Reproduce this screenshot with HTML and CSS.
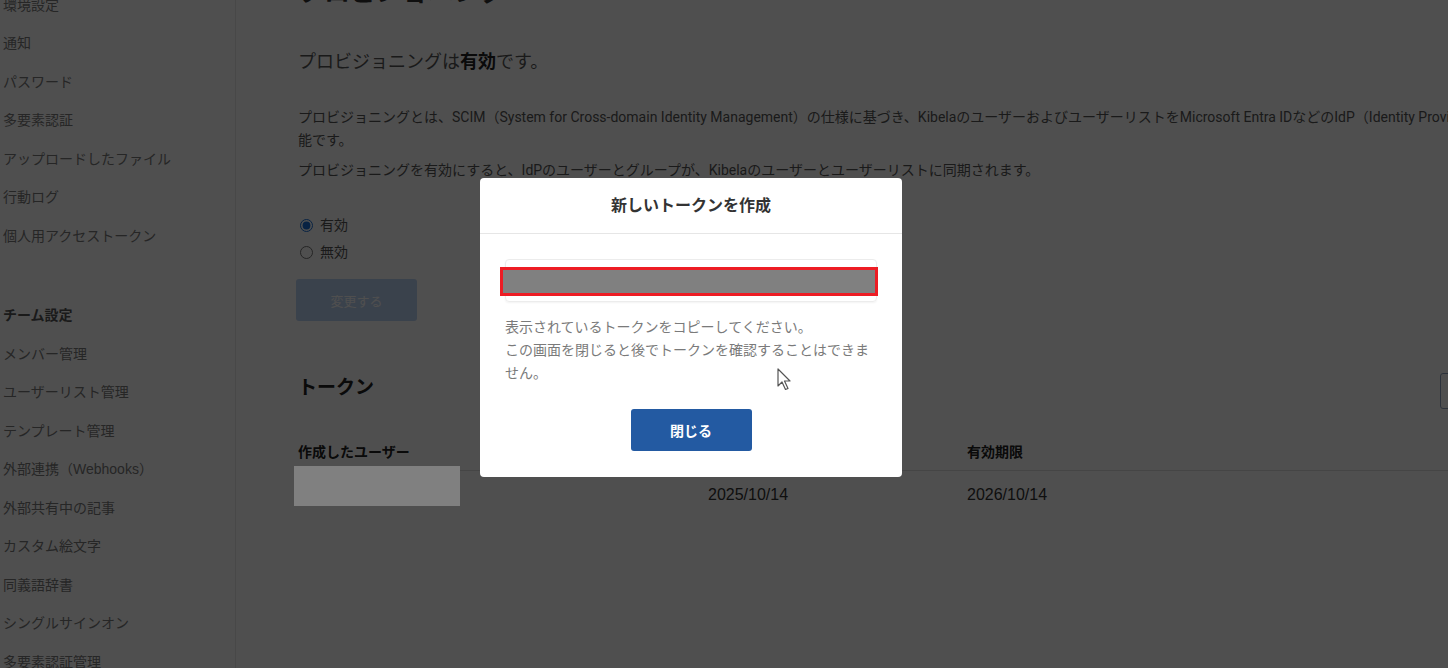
FILE: index.html
```html
<!DOCTYPE html>
<html lang="ja">
<head>
    <meta charset="UTF-8">
    <meta name="viewport" content="width=device-width, initial-scale=1.0">
    <title>プロビジョニング - 設定</title>
    <link rel="stylesheet" href="styles.css">
</head>
<body>
    <div class="layout">
        <aside class="sidebar">
            <h3 class="side-title">個人設定</h3>
            <ul class="side-menu">
                <li>環境設定</li>
                <li>通知</li>
                <li>パスワード</li>
                <li>多要素認証</li>
                <li>アップロードしたファイル</li>
                <li>行動ログ</li>
                <li>個人用アクセストークン</li>
            </ul>
            <h3 class="side-title team">チーム設定</h3>
            <ul class="side-menu">
                <li>メンバー管理</li>
                <li>ユーザーリスト管理</li>
                <li>テンプレート管理</li>
                <li>外部連携（Webhooks）</li>
                <li>外部共有中の記事</li>
                <li>カスタム絵文字</li>
                <li>同義語辞書</li>
                <li>シングルサインオン</li>
                <li>多要素認証管理</li>
                <li>プロビジョニング</li>
            </ul>
        </aside>

        <main class="content">
            <h1 class="page-title">プロビジョニング</h1>
            <p class="status">プロビジョニングは<strong>有効</strong>です。</p>
            <p class="desc">プロビジョニングとは、SCIM（System for Cross-domain Identity Management）の仕様に基づき、KibelaのユーザーおよびユーザーリストをMicrosoft Entra IDなどのIdP（Identity Provider）と自動同期が可能です。</p>
            <p class="desc">プロビジョニングを有効にすると、IdPのユーザーとグループが、Kibelaのユーザーとユーザーリストに同期されます。</p>

            <form class="toggle">
                <label class="radio"><input type="radio" name="provisioning" checked> 有効</label>
                <label class="radio"><input type="radio" name="provisioning"> 無効</label>
                <button class="btn-primary" type="button">変更する</button>
            </form>

            <div class="section-head">
                <h2>トークン</h2>
                <button class="btn-outline" type="button">新しいトークンを作成</button>
            </div>

            <table class="tokens">
                <thead>
                    <tr>
                        <th class="col-user">作成したユーザー</th>
                        <th class="col-created">作成日</th>
                        <th>有効期限</th>
                    </tr>
                </thead>
                <tbody>
                    <tr>
                        <td><span class="mask"></span></td>
                        <td class="date">2025/10/14</td>
                        <td class="date">2026/10/14</td>
                    </tr>
                </tbody>
            </table>
        </main>
    </div>

    <div class="backdrop"></div>

    <div class="modal">
        <div class="modal-header">新しいトークンを作成</div>
        <div class="modal-body">
            <div class="token-field">
                <span class="token-mask"></span>
            </div>
            <p class="note">表示されているトークンをコピーしてください。<br>この画面を閉じると後でトークンを確認することはできません。</p>
            <div class="modal-actions">
                <button class="btn-close" type="button">閉じる</button>
            </div>
        </div>
    </div>

    <!-- mouse pointer -->
    <svg class="cursor" width="16" height="24" viewBox="0 0 16 24">
        <path d="M1 1 L1 18 L5 14 L8.5 21.5 L11 20.5 L7.5 13 L13 13 Z" fill="#fff" stroke="#555" stroke-width="1.2" stroke-linejoin="round"/>
    </svg>
</body>
</html>
```

FILE: styles.css
```css
/* Settings page */
body {
    font-family: "Liberation Sans", "Noto Sans CJK JP", sans-serif;
    margin: 0;
    padding: 0;
    background-color: #fff;
    color: #444;
    overflow: hidden;
}

.layout {
    display: flex;
    margin-top: -72px;
}

.sidebar {
    width: 236px;
    flex-shrink: 0;
    padding: 19px 0 0 3px;
    box-sizing: border-box;
    border-right: 1px solid #e8e8e8;
    min-height: 800px;
}

.side-title {
    margin: 0;
    font-size: 14px;
    line-height: 38.5px;
    font-weight: bold;
    color: #555;
}

.side-title.team {
    margin-top: 41px;
}

.side-menu {
    list-style: none;
    margin: 0;
    padding: 0;
}

.side-menu li {
    font-size: 14px;
    line-height: 38.5px;
    color: #7a7a7a;
    white-space: nowrap;
}

.content {
    width: 1292px;
    flex-shrink: 0;
    padding: 46px 0 0 62px;
}

.page-title {
    margin: 0;
    font-size: 26px;
    line-height: 36px;
    color: #333;
}

.status {
    margin: 40px 0 0;
    font-size: 18px;
    line-height: 24px;
    color: #555;
}

.status strong {
    color: #222;
}

.desc {
    margin: 32px 0 0;
    font-family: Roboto, "Noto Sans CJK JP", sans-serif;
    font-size: 14px;
    line-height: 23px;
    color: #555;
}

.desc + .desc {
    margin-top: 7px;
}

.toggle {
    margin-top: 30px;
}

.radio {
    display: flex;
    align-items: center;
    gap: 7px;
    font-size: 14px;
    line-height: 27px;
    color: #555;
}

.radio input {
    margin: 0 0 0 2px;
    width: 13px;
    height: 13px;
    accent-color: #1a6fd8;
}

.btn-primary {
    margin-top: 13px;
    margin-left: -2px;
    width: 121px;
    height: 42px;
    border: none;
    border-radius: 3px;
    background-color: #bcd4f4;
    color: #fff;
    font-family: inherit;
    font-size: 13px;
}

.section-head {
    display: flex;
    justify-content: space-between;
    align-items: flex-start;
    margin-top: 52px;
}

.section-head h2 {
    margin: 0;
    font-size: 19px;
    line-height: 30px;
    color: #222;
}

.btn-outline {
    width: 150px;
    height: 36px;
    border: 1px solid #8fa3bf;
    border-radius: 3px;
    background: #fff;
    color: #235aa6;
    font-family: inherit;
    font-size: 13px;
}

.tokens {
    margin-top: 25px;
    width: 100%;
    border-collapse: collapse;
}

.tokens th {
    text-align: left;
    font-size: 14px;
    line-height: 20px;
    padding: 8px 0;
    color: #222;
    border-bottom: 1px solid #ddd;
}

.col-user {
    width: 410px;
}

.col-created {
    width: 259px;
}

.tokens td {
    font-size: 16px;
    line-height: 40px;
    padding: 4px 0;
    color: #333;
}

.mask {
    display: block;
    position: relative;
    z-index: 20;
    left: -4px;
    top: -9px;
    width: 166px;
    height: 40px;
    background-color: #808080;
}

.backdrop {
    position: fixed;
    inset: 0;
    background-color: rgba(0, 0, 0, 0.69);
    z-index: 10;
}

.modal {
    position: fixed;
    left: 480px;
    top: 178px;
    width: 422px;
    background-color: #fff;
    border-radius: 4px;
    z-index: 30;
}

.modal-header {
    height: 55px;
    line-height: 55px;
    text-align: center;
    font-size: 16px;
    font-weight: bold;
    color: #333;
    border-bottom: 1px solid #e6e6e6;
}

.modal-body {
    padding: 25px 25px 26px;
}

.token-field {
    position: relative;
    height: 41px;
    border: 1px solid #ececec;
    border-radius: 4px;
    box-shadow: 0 1px 2px rgba(0, 0, 0, 0.05);
}

.token-mask {
    position: absolute;
    left: -6px;
    top: 7px;
    width: 378px;
    height: 29px;
    box-sizing: border-box;
    border: 3px solid #ed1c24;
    background-color: #808080;
}

.note {
    margin: 14px 0 0;
    font-size: 14px;
    line-height: 23px;
    color: #7a7a7a;
}

.modal-actions {
    display: flex;
    justify-content: center;
    margin-top: 24px;
}

.btn-close {
    width: 121px;
    height: 42px;
    border: none;
    border-radius: 3px;
    background-color: #235aa2;
    color: #fff;
    font-family: inherit;
    font-size: 14px;
    font-weight: bold;
}

.cursor {
    position: fixed;
    left: 777px;
    top: 368px;
    z-index: 40;
}
```
